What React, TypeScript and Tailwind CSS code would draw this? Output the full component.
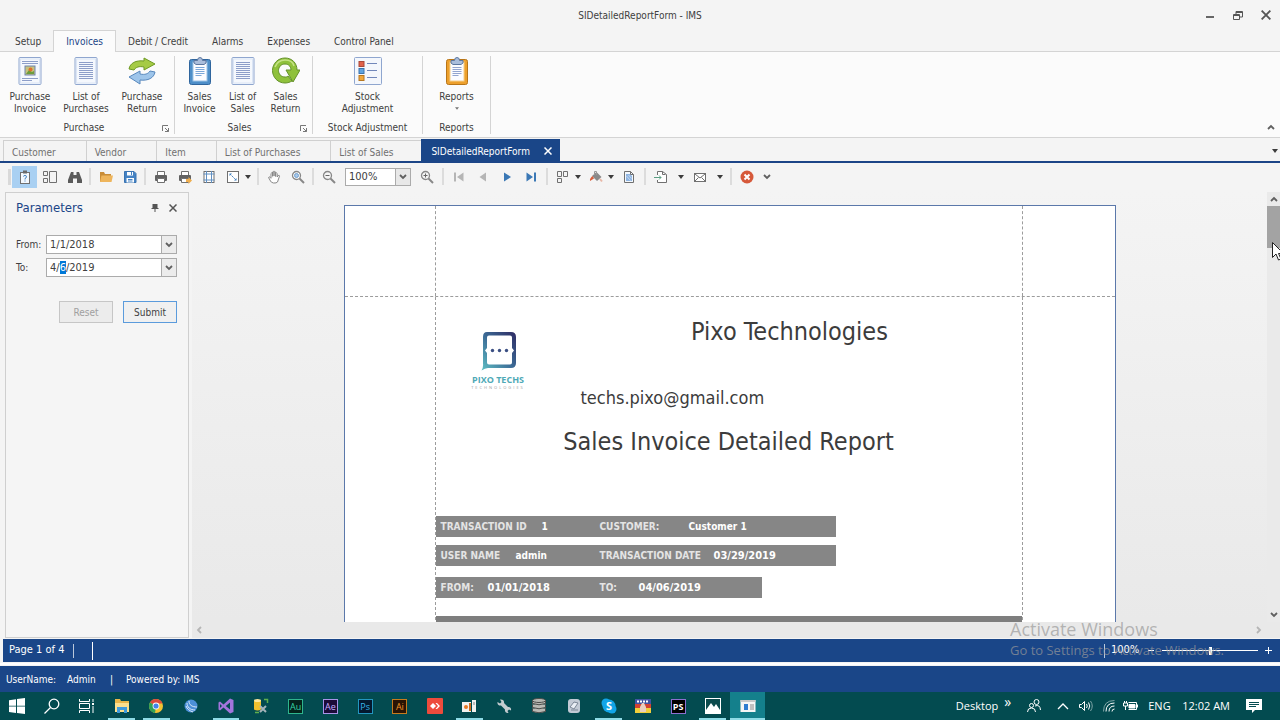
import { useEffect, useRef } from "react";

const appFont = "font-['DejaVu_Sans_Condensed','DejaVu_Sans',sans-serif]";

const ribbonTabs = ["Setup", "Invoices", "Debit / Credit", "Alarms", "Expenses", "Control Panel"];
const documentTabs = ["Customer", "Vendor", "Item", "List of Purchases", "List of Sales"];

function PageIcon({ picture = false }: { picture?: boolean }) {
  return (
    <svg viewBox="0 0 28 28" className="h-7 w-7">
      <rect x="3" y="0.5" width="22" height="27" rx="1" fill="#f5f8fd" stroke="#8fa6cf" />
      <rect x="4.5" y="2" width="19" height="24" fill="none" stroke="#dbe5f5" />
      {picture ? (
        <>
          <path d="M6 4.5h16M6 6.5h16M6 21.5h16M6 23.500h10" stroke="#8d9ec9" />
          <rect x="9" y="9" width="10" height="9" fill="#c7c27e" stroke="#6f83ae" />
          <path d="M10 17l3-4 3 2 2-1v3z" fill="#6d9d3b" />
          <circle cx="14.500" cy="12.500" r="2" fill="#e0702c" />
        </>
      ) : (
        <path
          d="M7 5.500h14M7 7.500h14M7 9.500h14M7 11.500h14M7 13.500h14M7 15.500h14M7 17.500h14M7 19.500h14M7 21.500h14"
          stroke="#8d9ec9"
        />
      )}
    </svg>
  );
}

function SwapIcon() {
  return (
    <svg viewBox="0 0 28 28" className="h-7 w-7">
      <path d="M1 12C2 6 8 3 16 4V1l11 6-11 6v-3c-5-1-8 0-10 3z" fill="#a5cb45" stroke="#6f9a25" />
      <path d="M27 15c-1 6-7 9-15 8v4L1 20l11-6v3c5 1 8 0 10-3z" fill="#9ec5ea" stroke="#5888bd" />
    </svg>
  );
}

function ReturnIcon() {
  return (
    <svg viewBox="0 0 28 28" className="h-7 w-7">
      <path
        d="M13 1C6 1 0.500 6.500 0.500 13.500S6 26 13 26c3 0 5-1 7-2l-4-5c-1 1-2 1-3 1-4 0-6.500-3-6.500-6.500S9 7 13 7s6 3 6 6h-5l7 12 7-12h-3C25 6 20 1 13 1z"
        fill="#8fc13b"
        stroke="#64912a"
      />
      <path d="M3 10c2-5 6-7 10-7s8 2 9 6" fill="none" stroke="#c5e285" strokeWidth="1.500" />
    </svg>
  );
}

function ClipboardIcon({ orange = false }: { orange?: boolean }) {
  return (
    <svg viewBox="0 0 28 28" className="h-7 w-7">
      <rect x="3.500" y="2.500" width="21" height="25" rx="2" fill={orange ? "#eda02c" : "#4d8ec8"} stroke={orange ? "#b87518" : "#2f659d"} />
      <rect x="7" y="5" width="14" height="19" fill="#fbfcff" stroke={orange ? "#f6cf8b" : "#9cc3e6"} />
      <path d="M8 6V3.500h3.500a2.500 3 0 0 1 5 0H20V6l-2 1.500h-8z" fill="#a9bddb" stroke="#5d779f" />
      <path d="M9.500 10.500h9M9.500 12.500h9M9.500 14.500h9M9.500 16.500h9M9.500 18.500h6" stroke={orange ? "#93a5cf" : "#7ba7d8"} />
    </svg>
  );
}

function StockIcon() {
  return (
    <svg viewBox="0 0 28 28" className="h-7 w-7">
      <rect x="0.500" y="0.500" width="27" height="27" rx="1" fill="#f4f7fc" stroke="#8fa6cf" />
      <rect x="5" y="4.500" width="5" height="5" fill="#e0614a" stroke="#a94838" />
      <rect x="5" y="11.500" width="5" height="5" fill="#5fa3df" stroke="#3c74ad" />
      <rect x="5" y="18.500" width="5" height="5" fill="#f1a73a" stroke="#b67720" />
      <path d="M13 6.500h10M13 13.500h10M13 20.500h10" stroke="#7187ba" />
    </svg>
  );
}

const ribbonGroups = [
  {
    name: "Purchase",
    width: "w-[175px] pl-0.5 pr-1",
    itemWidth: "w-14",
    captionPad: "pr-1",
    launcher: true,
    items: [
      { lines: ["Purchase", "Invoice"], icon: <PageIcon picture /> },
      { lines: ["List of", "Purchases"], icon: <PageIcon /> },
      { lines: ["Purchase", "Return"], icon: <SwapIcon /> },
    ],
  },
  {
    name: "Sales",
    width: "w-[138px] pl-[3px] pr-[5px]",
    itemWidth: "w-[43px]",
    captionPad: "pr-1.5",
    launcher: true,
    items: [
      { lines: ["Sales", "Invoice"], icon: <ClipboardIcon /> },
      { lines: ["List of", "Sales"], icon: <PageIcon /> },
      { lines: ["Sales", "Return"], icon: <ReturnIcon /> },
    ],
  },
  {
    name: "Stock Adjustment",
    width: "w-[110px]",
    itemWidth: "w-20",
    captionPad: "",
    launcher: false,
    items: [{ lines: ["Stock", "Adjustment"], icon: <StockIcon /> }],
  },
  {
    name: "Reports",
    width: "w-[68px]",
    itemWidth: "w-14",
    captionPad: "",
    launcher: false,
    items: [{ lines: ["Reports"], icon: <ClipboardIcon orange />, menu: true }],
  },
];

function Chevron({ up = false, className = "text-[#606060]" }: { up?: boolean; className?: string }) {
  return (
    <svg viewBox="0 0 8 8" className={`h-2 w-2 ${className}`}>
      <path d={up ? "M1 6l3-3 3 3" : "M1 2l3 3 3-3"} fill="none" stroke="currentColor" strokeWidth="1.800" />
    </svg>
  );
}

function Caret({ small = false }: { small?: boolean }) {
  return (
    <svg viewBox="0 0 6 4" className={small ? "h-[3px] w-1" : "h-1 w-1.5"}>
      <path d="M0 0h6L3 4z" fill={small ? "#777" : "#3c3c3c"} />
    </svg>
  );
}

function CloseMark({ className }: { className: string }) {
  return (
    <svg viewBox="0 0 8 8" className={className}>
      <path d="M0.500 0.500l7 7M7.500 0.500l-7 7" stroke="currentColor" strokeWidth="1.500" />
    </svg>
  );
}

function Separator({ tight = false }: { tight?: boolean }) {
  return <span className={`mr-[3px] h-[17px] w-0.5 shrink-0 bg-[#dcdcdc] ${tight ? "ml-0.5" : "ml-[3px]"}`} />;
}

interface ToolProps {
  label: string;
  className?: string;
  children: React.ReactNode;
}

function Tool({ label, className = "h-[22px] w-6", children }: ToolProps) {
  return (
    <button type="button" title={label} className={`flex shrink-0 items-center justify-center ${className}`}>
      <svg viewBox="0 0 14 14" className="h-3.5 w-3.5" fill="none" stroke="#707070">
        {children}
      </svg>
    </button>
  );
}

function DropArrow({ label, className = "-ml-1 w-[13px]" }: { label: string; className?: string }) {
  return (
    <button type="button" title={label} className={`flex h-[22px] shrink-0 items-center justify-center ${className}`}>
      <Caret />
    </button>
  );
}

function PrinterShape() {
  return (
    <>
      <path d="M3.500 5V1.500h7V5" fill="#fff" />
      <rect x="1" y="5" width="12" height="6" rx="1" fill="#626262" stroke="none" />
      <path d="M3.500 8.500h7v4h-7z" fill="#fff" />
    </>
  );
}

function ZoomShape({ sign }: { sign: string }) {
  return (
    <>
      <circle cx="5.500" cy="5.500" r="4" stroke="#888" strokeWidth="1.300" />
      <path d={sign} stroke="#666" />
      <path d="M8.500 8.500l4.500 4.500" stroke="#888" strokeWidth="2" />
    </>
  );
}

function Toolbar() {
  return (
    <div className="flex h-[29px] shrink-0 items-center bg-[#f4f4f4] pb-0.5 pl-2">
      <span className="mr-px h-4 w-[3px] bg-[#d9d9d9]" />
      <Tool label="Parameters" className="h-[22px] w-[25px] bg-[#a9d0f2]">
        <rect x="2.500" y="2.500" width="9" height="11" fill="#f3f8fd" />
        <rect x="5" y="0.500" width="4" height="3" fill="#6a6a6a" stroke="none" />
        <path d="M5.500 6.500q0-1 1.500-1t1.500 1.200T7 8.500v1M7 10.500v1" stroke="#3d7dbd" />
      </Tool>
      <Tool label="Thumbnails" className="h-[22px] w-[25px]">
        <path d="M0.500 1.500h4v4h-4zM0.500 8.500h4v4h-4zM6.500 1.500h7v11h-7z" />
      </Tool>
      <Tool label="Search" className="h-[22px] w-[25px]">
        <path d="M3 2h2.500v3h3V2H11l3 8v3H9V8.500H5V13H0v-3z" fill="#5b5b5b" stroke="none" />
      </Tool>
      <Separator tight />
      <Tool label="Open">
        <path d="M1 12V2h4l1 2h6v2" fill="#c98d38" stroke="none" />
        <path d="M1 12l1.500-6.500H14L12.500 12z" fill="#eeb55c" stroke="none" />
      </Tool>
      <Tool label="Save">
        <path d="M1.500 1.500h9.500l2 2v9h-11.500z" fill="#4583c4" stroke="#3a74b2" />
        <path d="M4 2h6v3.500H4zM3.500 8h7.500v4.500H3.500z" fill="#fff" stroke="none" />
        <path d="M8.500 2v3M5 9.500h4.500M5 11h4.500" stroke="#4583c4" />
      </Tool>
      <Separator tight />
      <Tool label="Print">
        <PrinterShape />
      </Tool>
      <Tool label="Quick Print">
        <PrinterShape />
        <path d="M8 9h2.500V7L14 10.500 10.500 14v-2H8z" fill="#efae4e" stroke="none" />
      </Tool>
      <Tool label="Page Setup">
        <rect x="2" y="1.500" width="10" height="11" fill="#fff" />
        <path d="M4.500 1v12M9.500 1v12M1.500 4h11M1.500 10h11" stroke="#6190c2" />
      </Tool>
      <Tool label="Scale">
        <rect x="1.500" y="1.500" width="11" height="11" fill="#fff" />
        <path d="M4 4l6 6" stroke="#3f7fbf" strokeDasharray="2 1" />
        <path d="M3.500 3.500h2.500L3.500 6zM10.500 10.500H8L10.500 8z" fill="#3f7fbf" stroke="none" />
      </Tool>
      <DropArrow label="Scale options" className="-ml-1 w-3.5" />
      <Separator tight />
      <Tool label="Hand Tool">
        <path
          d="M4 8V3.500q.7-1.300 1.500 0V6.500M5.500 6V2q.7-1.300 1.500 0v4M7 6V2q.8-1.300 1.600 0v4.500M8.600 6.500v-3q.8-1.300 1.600 0V7l1-1.500q1.400-.5 1.300.6L10.500 12q-1 1.300-4 1-2.500-.5-3-2L1.500 7.500q.5-1.200 1.500-.3L4 8.500"
          fill="#fff"
          stroke="#888"
        />
      </Tool>
      <Tool label="Magnifier">
        <circle cx="5.500" cy="5.500" r="4" stroke="#888" strokeWidth="1.300" fill="#fff" />
        <circle cx="5.500" cy="5.500" r="2" fill="#a9c8e8" stroke="#6f9fd0" />
        <path d="M8.500 8.500l4.500 4.500" stroke="#888" strokeWidth="2" />
      </Tool>
      <Separator tight />
      <Tool label="Zoom Out">
        <ZoomShape sign="M3.500 5.500h4" />
      </Tool>
      <div className="relative mx-1 h-[18px] w-[66px] shrink-0">
        <select
          aria-label="Zoom"
          className="h-full w-full appearance-none border border-[#ababab] bg-white pl-[3px] text-[11px] leading-4 text-[#3c3c3c] outline-none"
        >
          <option>100%</option>
        </select>
        <span className="pointer-events-none absolute inset-y-0 right-0 flex w-4 items-center justify-center border border-[#ababab] bg-[#e8e8e8]">
          <Chevron />
        </span>
      </div>
      <Tool label="Zoom In">
        <ZoomShape sign="M3.500 5.500h4M5.500 3.500v4" />
      </Tool>
      <Separator />
      <Tool label="First Page">
        <path d="M2 2.500h2v9H2zM11.500 2.500v9L5 7z" fill="#b5b5b5" stroke="none" />
      </Tool>
      <Tool label="Previous Page">
        <path d="M10 2.500v9L3.500 7z" fill="#b5b5b5" stroke="none" />
      </Tool>
      <Tool label="Next Page">
        <path d="M4 2.500v9L11 7z" fill="#3b78b5" stroke="none" />
      </Tool>
      <Tool label="Last Page">
        <path d="M2.500 2.500v9L9 7zM10 2.500h2v9h-2z" fill="#3b78b5" stroke="none" />
      </Tool>
      <Separator />
      <Tool label="Multiple Pages">
        <path d="M1.500 1.500h4v5h-4zM7.500 1.500h4v5h-4zM1.500 8.500h4v4h-4z" />
      </Tool>
      <DropArrow label="Multiple Pages options" />
      <Tool label="Color">
        <path d="M3 6l4.500-4 5 5-4.500 4z" fill="#8a8a8a" stroke="none" />
        <path d="M5.500 5V1.500h2V5" stroke="#999" />
        <path d="M3.500 6C2 7.500 0.500 8.500 1 11L5 8.500z" fill="#d9603d" stroke="none" />
        <path d="M11 9l2 2.500" stroke="#e8b8a8" strokeWidth="2" />
      </Tool>
      <DropArrow label="Color options" />
      <Tool label="Watermark">
        <path d="M2.500 1.500h6l3 3v8h-9z" fill="#f3f8fd" />
        <path d="M4 4h4l2 2v5H4z" fill="#8fb5e2" stroke="none" />
        <path d="M8.500 1.500v3h3" />
        <path d="M4.500 6l4 4.500M6.500 5l3 3.500" stroke="#c5d9f1" />
      </Tool>
      <Separator />
      <Tool label="Export">
        <path d="M3.500 5V1.500h5l4 3v8h-9V10" fill="#fff" />
        <path d="M8.500 1.500v3h3" />
        <path d="M0 7.500h7M5 5.500l2 2-2 2" stroke="#5b9f83" />
      </Tool>
      <DropArrow label="Export options" className="w-[15px]" />
      <Tool label="Send">
        <rect x="1.500" y="3.500" width="11" height="8" fill="#fff" />
        <path d="M2 4l5 4 5-4M2 11l3.500-3.500M12 11L8.500 7.500" />
      </Tool>
      <DropArrow label="Send options" className="w-[15px]" />
      <Separator />
      <Tool label="Close">
        <circle cx="7" cy="7" r="6.500" fill="#d6593a" stroke="none" />
        <path d="M4.500 4.500l5 5M9.500 4.500l-5 5" stroke="#fff" strokeWidth="2" />
      </Tool>
      <button type="button" title="More" className="flex h-[22px] w-4 items-center justify-center">
        <Chevron />
      </button>
    </div>
  );
}

function Ribbon() {
  return (
    <>
      <nav className="relative z-10 -mb-px flex h-[22px] shrink-0 pl-[3px]">
        {ribbonTabs.map((tab) => (
          <button
            key={tab}
            type="button"
            className={
              tab === "Invoices"
                ? "border border-b-0 border-[#d4d4d4] bg-[#fbfbfb] px-3 text-[#1c4587]"
                : "px-3"
            }
          >
            {tab}
          </button>
        ))}
      </nav>
      <div className="flex h-[87px] shrink-0 border-y border-[#d4d4d4] bg-[#fbfbfb] pt-1 pb-[3px]">
        {ribbonGroups.map((group) => (
          <section key={group.name} className={`relative flex shrink-0 flex-col border-r border-[#d4d4d4] ${group.width}`}>
            <div className="flex flex-1 justify-center">
              {group.items.map((item) => (
                <button
                  key={item.lines.join(" ")}
                  type="button"
                  className={`flex shrink-0 flex-col items-center pt-px leading-3 ${group.itemWidth}`}
                >
                  {item.icon}
                  <span className="mt-1.5">{item.lines[0]}</span>
                  {"menu" in item ? (
                    <span className="mt-1">
                      <Caret small />
                    </span>
                  ) : (
                    <span>{item.lines[1]}</span>
                  )}
                </button>
              ))}
            </div>
            <h2 className={`text-center leading-3 whitespace-nowrap ${group.captionPad}`}>{group.name}</h2>
            {group.launcher && (
              <button type="button" title={`${group.name} options`} className="absolute right-[5px] bottom-0.5">
                <svg viewBox="0 0 7 7" className="h-[7px] w-[7px]" fill="none" stroke="#777">
                  <path d="M0.500 6V0.500H6M3 3l3.500 3.500M6.500 3v3.500H3" />
                </svg>
              </button>
            )}
          </section>
        ))}
        <button type="button" title="Collapse the ribbon" className="mt-auto mr-[5px] mb-[3px] ml-auto">
          <Chevron up />
        </button>
      </div>
    </>
  );
}

function DocumentTabs() {
  return (
    <div className="flex h-[25px] shrink-0 items-end border-b-2 border-[#1c4587] pl-[3px]">
      {documentTabs.map((tab) => (
        <button
          key={tab}
          type="button"
          className="h-[21px] border-t border-l border-[#d0d0d0] pr-[30px] pl-2 pt-0.5 whitespace-nowrap text-[#707070]"
        >
          {tab}
        </button>
      ))}
      <div className="-ml-0.5 flex h-[22px] items-center bg-[#1a4688] pt-0.5 pr-2 pl-2.5 text-white">
        <button type="button">SIDetailedReportForm</button>
        <button type="button" title="Close tab" className="ml-3.5">
          <CloseMark className="h-2 w-2" />
        </button>
      </div>
      <button type="button" title="Window list" className="mr-0.5 mb-2 ml-auto">
        <Caret />
      </button>
    </div>
  );
}

function DateField({ id, label, value, selection }: { id: string; label: string; value: string; selection?: [number, number] }) {
  const ref = useRef<HTMLInputElement>(null);

  useEffect(() => {
    if (!selection || !ref.current) return;
    ref.current.focus();
    ref.current.setSelectionRange(selection[0], selection[1]);
  }, [selection]);

  return (
    <div className="flex h-[19px] items-center">
      <label htmlFor={id} className="w-[30px] shrink-0">
        {label}
      </label>
      <input
        ref={ref}
        id={id}
        type="text"
        defaultValue={value}
        className="h-full min-w-0 flex-1 border border-[#ababab] bg-white pl-[3px] text-[11px] outline-none selection:bg-[#0078d7] selection:text-white"
      />
      <button type="button" title="Open calendar" className="-ml-px flex h-full w-4 items-center justify-center border border-[#ababab] bg-[#ececec]">
        <Chevron />
      </button>
    </div>
  );
}

const monthSelection: [number, number] = [2, 3];

function ParametersPanel() {
  return (
    <aside className="ml-[5px] w-[184px] shrink-0 border border-[#cfcfcf] bg-[#f5f5f5] pr-[11px] pl-2.5">
      <div className="flex h-[30px] items-center">
        <h2 className="text-[13px] text-[#1c4587]">Parameters</h2>
        <button type="button" title="Auto Hide" className="mr-2.5 ml-auto text-[#555]">
          <svg viewBox="0 0 8 8" className="h-2 w-2">
            <path d="M1.500 0h5v4h1v1h-3v3h-1V5h-3V4h1z" fill="currentColor" />
          </svg>
        </button>
        <button type="button" title="Close" className="text-[#555]">
          <CloseMark className="h-2 w-2" />
        </button>
      </div>
      <form onSubmit={(e) => e.preventDefault()} className="mt-3 flex flex-col gap-1">
        <DateField id="from" label="From:" value="1/1/2018" />
        <DateField id="to" label="To:" value="4/6/2019" selection={monthSelection} />
        <div className="mt-5 flex justify-end gap-2.5">
          <button type="button" className="h-[22px] w-[54px] border border-[#c6c6c6] bg-[#ececec] text-[#a0a0a0]">
            Reset
          </button>
          <button type="submit" className="h-[22px] w-[54px] border border-[#5b9bdc] bg-[#f0f0f0]">
            Submit
          </button>
        </div>
      </form>
    </aside>
  );
}

function PixoLogo() {
  return (
    <svg viewBox="0 0 54 58" className="h-[58px] w-[54px]">
      <defs>
        <linearGradient id="pixo" x1="1" y1="0" x2="0" y2="1">
          <stop offset="0" stopColor="#2f2b63" />
          <stop offset="0.500" stopColor="#3c6b96" />
          <stop offset="1" stopColor="#5fc0c4" />
        </linearGradient>
      </defs>
      <path
        fillRule="evenodd"
        fill="url(#pixo)"
        d="M16 0h24q5 0 5 5v26q0 5-5 5H17q-3 0-6.500 2.500 2-3 1.500-7V5q0-5 4-5zM18 3.500q-2 0-2 2V16l-2 2.500 2 2.500v9.500q0 2 2 2h21q2 0 2-2V21l2-2.500-2-2.500V5.500q0-2-2-2z"
      />
      <g fill="#3b4f83">
        <circle cx="21.500" cy="18.500" r="1.700" />
        <circle cx="28.500" cy="18.500" r="1.700" />
        <circle cx="35.500" cy="18.500" r="1.700" />
      </g>
      <text x="27" y="51" textAnchor="middle" className="font-['Open_Sans',sans-serif] text-[9px] font-bold" fill="#4fa9b6">
        PIXO TECHS
      </text>
      <text x="27" y="57" textAnchor="middle" className="font-['Open_Sans',sans-serif] text-[4px] tracking-[2px]" fill="#a0a0a0">
        TECHNOLOGIES
      </text>
    </svg>
  );
}

const reportRows = [
  {
    layout: "w-[400px] grid-cols-[101px_58px_89px_1fr]",
    gap: "mt-14",
    cells: ["TRANSACTION ID", "1", "CUSTOMER:", "Customer 1"],
  },
  {
    layout: "w-[400px] grid-cols-[75px_84px_114px_1fr]",
    gap: "mt-2",
    cells: ["USER NAME", "admin", "TRANSACTION DATE", "03/29/2019"],
  },
  {
    layout: "w-[326px] grid-cols-[47px_112px_39px_1fr]",
    gap: "mt-[11px]",
    cells: ["FROM:", "01/01/2018", "TO:", "04/06/2019"],
  },
];

function ReportValue({ value }: { value: string }) {
  return <dd className={`text-white ${value.includes("/") ? "text-[11px]" : ""}`}>{value}</dd>;
}

function ReportPage() {
  return (
    <article className="mx-auto mt-[13px] flex h-full w-[772px] shrink-0 flex-col border border-[#5b78aa] bg-white text-[#3c3c3c]">
      <div className="flex h-[91px] shrink-0 border-b border-dashed border-[#9c9c9c]">
        <div className="w-[91px] border-r border-dashed border-[#9c9c9c]" />
        <div className="w-[587px] border-r border-dashed border-[#9c9c9c]" />
      </div>
      <div className="flex flex-1">
        <div className="w-[91px] border-r border-dashed border-[#9c9c9c]" />
        <div className="w-[587px] border-r border-dashed border-[#9c9c9c]">
          <div className="grid grid-cols-[122px_1fr] pt-[17px]">
            <div className="pt-[18px] pl-[35px]">
              <PixoLogo />
            </div>
            <div>
              <h1 className="text-center text-[25px] leading-9">Pixo Technologies</h1>
              <p className="mt-[34px] pl-[23px] text-[18px] leading-7">techs.pixo@gmail.com</p>
            </div>
          </div>
          <h2 className="mt-3 text-center text-[25px] leading-9">Sales Invoice Detailed Report</h2>
          {reportRows.map((row) => (
            <dl
              key={row.cells[0]}
              className={`grid h-[21px] items-baseline bg-[#868686] pl-[5px] text-[10px] leading-[21px] font-bold whitespace-nowrap ${row.gap} ${row.layout}`}
            >
              <dt className="text-[#e4e4e4]">{row.cells[0]}</dt>
              <ReportValue value={row.cells[1]} />
              <dt className="text-[#e4e4e4]">{row.cells[2]}</dt>
              <ReportValue value={row.cells[3]} />
            </dl>
          ))}
          <div className="mt-[18px] h-6 bg-[#7e7e7e]" />
        </div>
      </div>
    </article>
  );
}

function Viewer() {
  return (
    <main className="flex min-w-0 flex-1 flex-col pl-[3px]">
      <div className="flex min-h-0 flex-1">
        <div className="min-w-0 flex-1 overflow-hidden bg-linear-to-b from-[#f4f4f4] to-[#e9e9e9]">
          <ReportPage />
        </div>
        <div className="flex w-[13px] flex-col items-center bg-[#eaeaea]">
          <button type="button" title="Scroll up" className="flex h-3.5 w-full items-center justify-center">
            <Chevron up />
          </button>
          <div className="h-[42px] w-full bg-[#a3a3a3]" />
          <button type="button" title="Scroll down" className="mt-auto flex h-3.5 w-full items-center justify-center">
            <Chevron />
          </button>
        </div>
      </div>
      <div className="flex h-4 shrink-0 items-center justify-between bg-[#e9e9e9] px-[3px]">
        <button type="button" title="Scroll left" className="rotate-90">
          <Chevron className="text-[#b5b5b5]" />
        </button>
        <button type="button" title="Scroll right" className="mr-3.5 -rotate-90">
          <Chevron className="text-[#b5b5b5]" />
        </button>
      </div>
    </main>
  );
}

function StatusBars() {
  return (
    <>
      <div className="ml-[3px] flex h-[23px] shrink-0 items-center bg-[#1a4688] pl-1.5 text-[11px] text-white">
        <span>Page 1 of 4</span>
        <span className="ml-[9px] h-3.5 w-px bg-white/70" />
        <span className="ml-[18px] h-[18px] w-px bg-white" />
        <span className="ml-auto h-3.5 w-px bg-white/70" />
        <label htmlFor="zoom" className="ml-1.5 w-[29px]">
          100%
        </label>
        <button type="button" title="Zoom out" className="ml-2 flex h-3 w-2 items-center">
          <span className="h-px w-1.5 bg-white" />
        </button>
        <input
          id="zoom"
          type="range"
          min={0}
          max={100}
          defaultValue={50}
          className="ml-1.5 h-px w-24 appearance-none bg-white [&::-webkit-slider-thumb]:h-2 [&::-webkit-slider-thumb]:w-[3px] [&::-webkit-slider-thumb]:appearance-none [&::-webkit-slider-thumb]:bg-white"
        />
        <button type="button" title="Zoom in" className="mr-2 ml-[7px]">
          <svg viewBox="0 0 7 7" className="h-[7px] w-[7px]">
            <path d="M3.500 0v7M0 3.500h7" stroke="#fff" />
          </svg>
        </button>
      </div>
      <div className="my-px h-0.5 shrink-0 bg-white" />
      <footer className="flex h-[26px] shrink-0 items-center bg-[#1a4688] pl-1.5 text-white">
        <span className="w-[61px]">UserName:</span>
        <span className="w-[43px]">Admin</span>
        <span className="w-4">|</span>
        <span>Powered by: IMS</span>
      </footer>
    </>
  );
}

function AdobeTile({ text, className }: { text: string; className: string }) {
  return (
    <span className={`flex h-[15px] w-[15px] items-center justify-center border text-[9px] leading-none ${className}`}>
      {text}
    </span>
  );
}

const taskbarItems: { name: string; state?: "open" | "active"; icon: React.ReactNode }[] = [
  {
    name: "Start",
    icon: (
      <svg viewBox="0 0 16 16" className="h-4 w-4" fill="#fff">
        <path d="M0 2.200l7-1v6.500H0zM8 1l8-1v7.700H8zM0 8.500h7V15l-7-1zM8 8.500h8V16l-8-1z" />
      </svg>
    ),
  },
  {
    name: "Search",
    icon: (
      <svg viewBox="0 0 16 16" className="h-4 w-4" fill="none" stroke="#fff" strokeWidth="1.300">
        <circle cx="10" cy="6" r="4.800" />
        <path d="M6.500 9.500L0.500 15.500" />
      </svg>
    ),
  },
  {
    name: "Task View",
    icon: (
      <svg viewBox="0 0 16 16" className="h-4 w-4" fill="none" stroke="#fff">
        <path d="M0.500 1v2.500h10V1M0.500 15v-2.500h10V15M0.500 5.500h10v5h-10zM14 1v3M14 8v7" />
        <rect x="13" y="5" width="2" height="2" fill="#fff" stroke="none" />
      </svg>
    ),
  },
  {
    name: "File Explorer",
    state: "open",
    icon: (
      <svg viewBox="0 0 16 16" className="h-4 w-4">
        <path d="M1 1h5l1 2h8v11H1z" fill="#e8b64a" />
        <path d="M1 5h14v9H1z" fill="#fbe08f" />
        <path d="M3 15V9h10v6h-3v-3H6v3z" fill="#3f9bdc" />
      </svg>
    ),
  },
  {
    name: "Chrome",
    state: "open",
    icon: (
      <svg viewBox="0 0 16 16" className="h-4 w-4">
        <circle cx="8" cy="8" r="7" fill="#f1c232" />
        <path d="M8 8L2 4.500A7 7 0 0 1 14.500 5.500H8z" fill="#dd4b3e" />
        <path d="M2 4.500L8 8l-1 7A7 7 0 0 1 2 4.500z" fill="#2fa257" />
        <circle cx="8" cy="8" r="3.400" fill="#fff" />
        <circle cx="8" cy="8" r="2.600" fill="#4384e8" />
      </svg>
    ),
  },
  {
    name: "SQL Developer",
    icon: (
      <svg viewBox="0 0 16 16" className="h-4 w-4" fill="none">
        <circle cx="8" cy="8" r="6.500" fill="#4b8fd8" />
        <path d="M4 5c0 4 3 7 8 7M6 3c0 4 3 6 8 6M3 8c1 3 4 5 7 6" stroke="#dceafb" />
      </svg>
    ),
  },
  {
    name: "Visual Studio",
    state: "open",
    icon: (
      <svg viewBox="0 0 16 16" className="h-4 w-4">
        <path fillRule="evenodd" d="M12 0.500l3.500 1.500v12L12 15.500 5.500 9.500 2 12.500 0.500 11.500v-7L2 3.500l3.500 3zM12 4.500L7.800 8l4.200 3.500zM2 6v4l2-2z" fill="#a275dc" />
      </svg>
    ),
  },
  {
    name: "Database Tools",
    icon: (
      <svg viewBox="0 0 16 16" className="h-4 w-4" fill="none">
        <path d="M1 2.500v9q3.500 2 7 0v-9z" fill="#f2c12e" />
        <ellipse cx="4.500" cy="2.500" rx="3.500" ry="1.500" fill="#ffe79a" />
        <path d="M11 1.500h3.500V5M2 14.500h4" stroke="#60b04e" strokeWidth="1.500" />
        <path d="M7 8l6 6M13 8l-6 6" stroke="#a5b4ba" strokeWidth="2" />
      </svg>
    ),
  },
  { name: "Audition", icon: <AdobeTile text="Au" className="border-[#2fb58d] bg-[#04231c] text-[#35d3a5]" /> },
  { name: "After Effects", icon: <AdobeTile text="Ae" className="border-[#a893e8] bg-[#1c0b38] text-[#c5b0ff]" /> },
  { name: "Photoshop", icon: <AdobeTile text="Ps" className="border-[#2396c0] bg-[#04182e] text-[#38b6e8]" /> },
  { name: "Illustrator", icon: <AdobeTile text="Ai" className="border-[#c77b1d] bg-[#2a1404] text-[#f19629]" /> },
  {
    name: "AnyDesk",
    icon: (
      <svg viewBox="0 0 16 16" className="h-4 w-4">
        <rect width="16" height="16" rx="1" fill="#ee4b3c" />
        <path d="M6 5L9 8l-3 3-3-3z" fill="#fff" />
        <path d="M8.500 5H10l3 3-3 3H8.500l2.500-3z" fill="#fff" />
      </svg>
    ),
  },
  {
    name: "Sound",
    state: "open",
    icon: (
      <svg viewBox="0 0 16 16" className="h-4 w-4">
        <path d="M1 4h9v10H1zM11 2h4v12h-4z" fill="#f2f2ee" />
        <circle cx="5" cy="9" r="2" fill="#e67a25" />
        <path d="M8 5h2v8H8z" fill="#d36a1c" />
        <path d="M12 4h2v3h-2z" fill="#bbb" />
      </svg>
    ),
  },
  {
    name: "Configuration",
    icon: (
      <svg viewBox="0 0 16 16" className="h-4 w-4">
        <path d="M1.500 4L4 5.500 5.500 4 4 1.500C7 1 8.500 3 8 5l4 4c2-.5 3.500 1 3 3.500L13 11.500 11.500 13l1 2C10 15.500 8.500 13.500 9 11.500L5 7.500C3 8 1 6.500 1.500 4z" fill="#c4ccd0" />
      </svg>
    ),
  },
  {
    name: "Database",
    icon: (
      <svg viewBox="0 0 16 16" className="h-4 w-4" fill="#b9b9b4" stroke="#4c4c4a">
        <path d="M1.500 10.500v3q6.500 2.500 13 0v-3M1.500 6.500v3q6.500 2.500 13 0v-3M1.500 2.500v3q6.500 2.500 13 0v-3" />
        <ellipse cx="8" cy="2.500" rx="6.500" ry="2" />
      </svg>
    ),
  },
  {
    name: "Utility",
    icon: (
      <svg viewBox="0 0 16 16" className="h-4 w-4">
        <rect x="2" y="1" width="12" height="14" rx="3" fill="#c2cad5" />
        <path d="M4 9l4-5 4 1-4 6zM5 12h7" fill="#e9eef5" stroke="#7b8796" />
      </svg>
    ),
  },
  {
    name: "Skype",
    state: "open",
    icon: (
      <svg viewBox="0 0 16 16" className="h-4 w-4">
        <circle cx="5" cy="5" r="4.500" fill="#12a5e8" />
        <circle cx="11" cy="11" r="4.500" fill="#12a5e8" />
        <circle cx="8" cy="8" r="6.500" fill="#12a5e8" />
        <text x="8" y="12" textAnchor="middle" className="text-[11px] font-bold" fill="#fff">
          S
        </text>
      </svg>
    ),
  },
  {
    name: "Loader",
    icon: (
      <svg viewBox="0 0 16 16" className="h-4 w-4">
        <rect y="1" width="16" height="5" fill="#4054a3" />
        <rect y="6" width="16" height="4" fill="#d34232" />
        <rect y="10" width="16" height="5" fill="#f0cf3b" />
        <path d="M5 14V9l2-4h2l2 4v5z" fill="#e9d0c0" />
        <path d="M2 3.500h12" stroke="#fff" strokeWidth="2" strokeDasharray="2 1" />
      </svg>
    ),
  },
  { name: "PhpStorm", icon: <AdobeTile text="PS" className="border-[#8d6fd0] bg-black font-bold text-white" /> },
  {
    name: "Photos",
    state: "open",
    icon: (
      <svg viewBox="0 0 16 16" className="h-4 w-4">
        <rect x="0.500" y="0.500" width="15" height="15" fill="#0b4a4c" stroke="#fff" />
        <path d="M1 12l5-7 3 4 2-3 4 6v3H1z" fill="#fff" />
      </svg>
    ),
  },
  {
    name: "IMS",
    state: "active",
    icon: (
      <svg viewBox="0 0 16 16" className="h-4 w-4">
        <rect x="0.500" y="2" width="15" height="12" fill="#f5f5f5" />
        <path d="M0.500 2h15v2h-15z" fill="#c9c9c9" />
        <path d="M4 6h4v6H4z" fill="#2f7cd0" />
        <path d="M10 7h4M10 9h4M10 11h4" stroke="#8a8a8a" />
      </svg>
    ),
  },
];

function Taskbar() {
  return (
    <div className="flex h-7 shrink-0 items-center bg-[#034b50] font-['Open_Sans',sans-serif] text-[11px] text-white">
      <div className="grid h-full w-[765px] shrink-0 grid-cols-22">
        {taskbarItems.map((item) => (
          <button
            key={item.name}
            type="button"
            title={item.name}
            className={`relative flex items-center justify-center ${item.state === "active" ? "bg-[#14808c]" : ""}`}
          >
            {item.icon}
            {item.state && (
              <span
                className={`absolute bottom-0 h-0.5 bg-[#8fdbe6] ${item.state === "active" ? "inset-x-0" : "inset-x-1"}`}
              />
            )}
          </button>
        ))}
      </div>
      <div className="ml-auto flex items-center pr-[18px]">
        <span>Desktop</span>
        <span className="ml-1.5 pb-2 text-[14px] leading-4">»</span>
        <svg viewBox="0 0 14 14" className="ml-4 h-3.5 w-3.5" fill="none" stroke="#fff">
          <circle cx="9.500" cy="3" r="2.500" />
          <circle cx="4.500" cy="6.500" r="2" />
          <path d="M0.500 13q0-4 4-4t4 4M8 7q5-2 5.500 4" />
        </svg>
        <svg viewBox="0 0 12 8" className="ml-4 h-2 w-3" fill="none" stroke="#fff">
          <path d="M1 7l5-5 5 5" strokeWidth="1.300" />
        </svg>
        <svg viewBox="0 0 14 12" className="ml-2.5 h-3 w-3.5" fill="none" stroke="#fff">
          <path d="M0.500 4.500v3h2l3 3v-9l-3 3zM7.500 4q1.500 2 0 4M9.500 2.500q2.500 3.500 0 7" />
          <path d="M11.500 1q3.500 5 0 10" stroke="#7fa5a7" />
        </svg>
        <svg viewBox="0 0 12 12" className="ml-2.5 h-3 w-3" fill="none" stroke="#fff">
          <path d="M0.500 11.500q0-11 11-11" stroke="#7fa5a7" />
          <path d="M3 11.500Q3 3 11.500 3M6 11.500Q6 6 11.500 6M9 11.500Q9 9 11.500 9" />
        </svg>
        <svg viewBox="0 0 15 12" className="ml-2 h-3 w-[15px]" fill="none" stroke="#fff">
          <path d="M5.500 2.500h8v7h-8M14.500 4.500v3M1.500 1v2M3.500 1v2M0.500 3h4v3h-4zM2.500 6v4" />
          <path d="M6 4.500h6v3.500H6z" fill="#fff" />
        </svg>
        <span className="ml-2.5 w-[22px]">ENG</span>
        <span className="ml-3 whitespace-nowrap">12:02 AM</span>
        <svg viewBox="0 0 16 15" className="ml-4 h-[15px] w-4">
          <path d="M0 0h16v11H9l-3 3v-3H0z" fill="#fff" />
          <path d="M3 3.500h10M3 5.500h10M3 7.500h7" stroke="#034b50" />
        </svg>
      </div>
    </div>
  );
}

export default function App() {
  return (
    <div className={`relative flex h-screen flex-col overflow-hidden bg-[#f4f4f4] text-[10px] text-[#404040] ${appFont}`}>
      <header className="grid h-[30px] shrink-0 grid-cols-[1fr_auto_1fr] items-center">
        <span />
        <h1>SIDetailedReportForm - IMS</h1>
        <div className="flex justify-end text-[#555]">
          <button type="button" title="Minimize" className="flex h-7 w-7 items-center justify-center pt-1">
            <span className="h-0.5 w-2 bg-[#666]" />
          </button>
          <button type="button" title="Restore" className="flex h-7 w-7 items-center justify-center">
            <svg viewBox="0 0 10 10" className="h-2.5 w-2.5" fill="none" stroke="currentColor">
              <path d="M0.500 4.500h6v5h-6zM0.500 5.500h6M3 4V1.500h6.500V7H7M3 2.500h6.500" />
            </svg>
          </button>
          <button type="button" title="Close" className="flex h-7 w-7 items-center justify-center">
            <CloseMark className="h-2.5 w-2.5" />
          </button>
        </div>
      </header>
      <Ribbon />
      <DocumentTabs />
      <Toolbar />
      <div className="flex min-h-0 flex-1 pb-px">
        <ParametersPanel />
        <Viewer />
      </div>
      <StatusBars />
      <Taskbar />

      {/* Windows activation notice */}
      <div className="pointer-events-none absolute right-14 bottom-[60px] font-['Open_Sans',sans-serif] whitespace-nowrap text-[#9a9a9a]/70">
        <p className="text-[18px] leading-[22px]">Activate Windows</p>
        <p className="text-[13px] leading-5">Go to Settings to Activate Windows.</p>
      </div>

      {/* mouse pointer */}
      <svg viewBox="0 0 12 19" className="pointer-events-none absolute top-[242px] -right-1 h-[19px] w-3">
        <path d="M0.500 0.500v15l3.500-3.500 2.500 6 2.500-1-2.500-5.500h5z" fill="#fff" stroke="#222" />
      </svg>
    </div>
  );
}
